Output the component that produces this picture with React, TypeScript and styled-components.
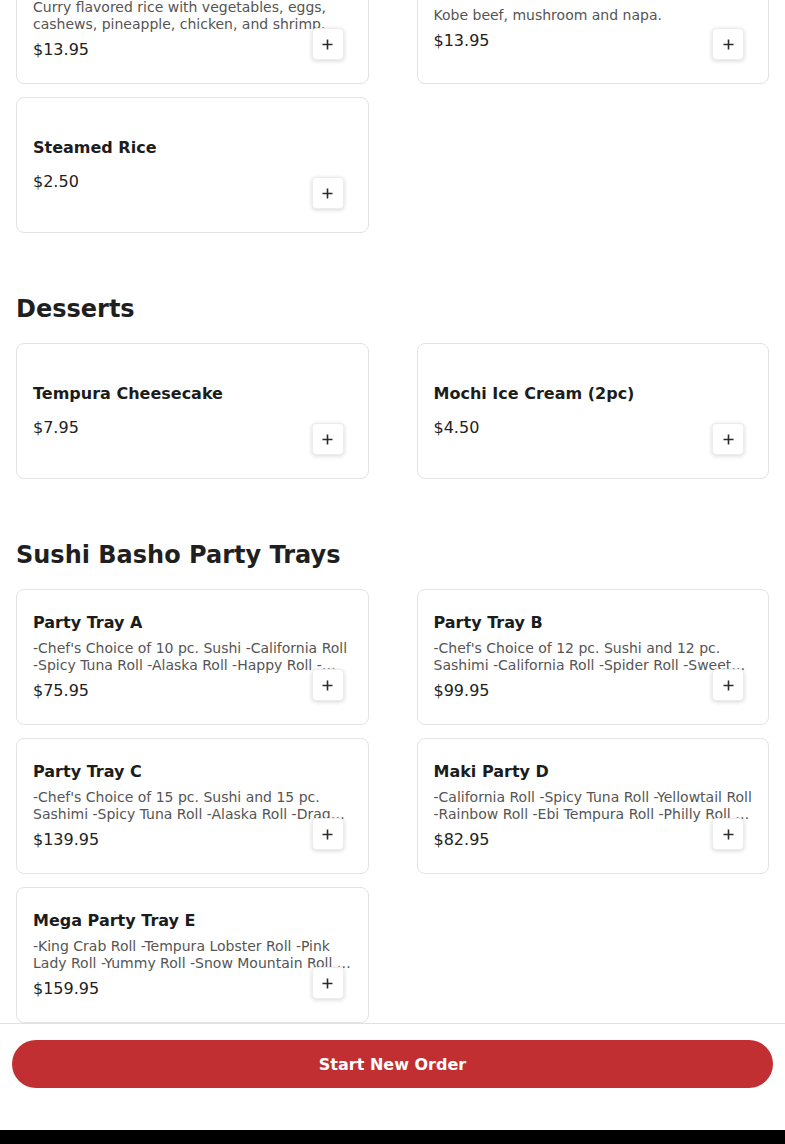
import React from "react";
import styled, { createGlobalStyle } from "styled-components";

interface MenuItem {
  name: string;
  description?: string;
  price: string;
}

interface MenuSection {
  title?: string;
  items: MenuItem[];
}

const sections: MenuSection[] = [
  {
    items: [
      {
        name: "Curry Fried Rice",
        description:
          "Curry flavored rice with vegetables, eggs, cashews, pineapple, chicken, and shrimp.",
        price: "$13.95",
      },
      {
        name: "Beef Sukiyaki",
        description: "Kobe beef, mushroom and napa.",
        price: "$13.95",
      },
      { name: "Steamed Rice", price: "$2.50" },
    ],
  },
  {
    title: "Desserts",
    items: [
      { name: "Tempura Cheesecake", price: "$7.95" },
      { name: "Mochi Ice Cream (2pc)", price: "$4.50" },
    ],
  },
  {
    title: "Sushi Basho Party Trays",
    items: [
      {
        name: "Party Tray A",
        description:
          "-Chef's Choice of 10 pc. Sushi -California Roll -Spicy Tuna Roll -Alaska Roll -Happy Roll -Rainbow Roll",
        price: "$75.95",
      },
      {
        name: "Party Tray B",
        description:
          "-Chef's Choice of 12 pc. Sushi and 12 pc. Sashimi -California Roll -Spider Roll -Sweet Heart Roll -Dragon Roll",
        price: "$99.95",
      },
      {
        name: "Party Tray C",
        description:
          "-Chef's Choice of 15 pc. Sushi and 15 pc. Sashimi -Spicy Tuna Roll -Alaska Roll -Dragon Roll -Rainbow Roll",
        price: "$139.95",
      },
      {
        name: "Maki Party D",
        description:
          "-California Roll -Spicy Tuna Roll -Yellowtail Roll -Rainbow Roll -Ebi Tempura Roll -Philly Roll -Alaska Roll",
        price: "$82.95",
      },
      {
        name: "Mega Party Tray E",
        description:
          "-King Crab Roll -Tempura Lobster Roll -Pink Lady Roll -Yummy Roll -Snow Mountain Roll -Dragon Roll",
        price: "$159.95",
      },
    ],
  },
];

const PlusIcon = () => (
  <svg width="11" height="11" viewBox="0 0 11 11" aria-hidden="true">
    <path d="M5.5 0.5v10M0.5 5.5h10" stroke="#2b2b2b" strokeWidth="1.6" />
  </svg>
);

const App: React.FC = () => {
  return (
    <>
      <GlobalStyle />
      <Page>
        {sections.map((section, sIndex) => (
          <Section key={sIndex} first={sIndex === 0}>
            {section.title && <SectionTitle>{section.title}</SectionTitle>}
            <Grid>
              {section.items.map((item) => (
                <Card key={item.name}>
                  <ItemName>{item.name}</ItemName>
                  {item.description && (
                    <ItemDescription>{item.description}</ItemDescription>
                  )}
                  <ItemPrice hasDescription={!!item.description}>
                    {item.price}
                  </ItemPrice>
                  <AddButton aria-label={`Add ${item.name}`}>
                    <PlusIcon />
                  </AddButton>
                </Card>
              ))}
            </Grid>
          </Section>
        ))}
      </Page>

      <Footer>
        <FooterInner>
          <OrderButton>Start New Order</OrderButton>
        </FooterInner>
        <BottomStrip />
      </Footer>
    </>
  );
};

export default App;

/** Styled Components */
const GlobalStyle = createGlobalStyle`
  * { box-sizing: border-box; }
  html, body {
    margin: 0;
    padding: 0;
    background: #ffffff;
    font-family: "DejaVu Sans", "Noto Sans", sans-serif;
    color: #1f1f1f;
  }
`;

const Page = styled.main`
  padding: 0 16px 160px;
  margin-top: -52px;
`;

const Section = styled.section<{ first: boolean }>`
  margin-top: ${(p) => (p.first ? "0" : "61px")};
`;

const SectionTitle = styled.h2`
  margin: 0 0 19px;
  font-size: 24px;
  line-height: 30px;
  font-weight: 700;
  color: #1f1f1f;
`;

const Grid = styled.div`
  display: grid;
  grid-template-columns: 1fr 1fr;
  column-gap: 48px;
  row-gap: 13px;
`;

const Card = styled.div`
  position: relative;
  height: 136px;
  display: flex;
  flex-direction: column;
  justify-content: center;
  padding: 0 16px 2px;
  background: #ffffff;
  border: 1px solid #e3e3e3;
  border-radius: 8px;
`;

const ItemName = styled.div`
  font-size: 16px;
  line-height: 19px;
  font-weight: 700;
  color: #1c1c1c;
`;

const ItemDescription = styled.div`
  margin-top: 8px;
  font-size: 14px;
  line-height: 17px;
  color: #555555;
  display: -webkit-box;
  -webkit-line-clamp: 2;
  -webkit-box-orient: vertical;
  overflow: hidden;
`;

const ItemPrice = styled.div<{ hasDescription: boolean }>`
  margin-top: ${(p) => (p.hasDescription ? "7px" : "15px")};
  font-size: 16px;
  line-height: 19px;
  color: #222222;
`;

const AddButton = styled.button`
  position: absolute;
  right: 24px;
  bottom: 23px;
  width: 32px;
  height: 32px;
  display: flex;
  align-items: center;
  justify-content: center;
  padding: 0;
  background: #ffffff;
  border: 1px solid #ececec;
  border-radius: 4px;
  box-shadow: 0 1px 4px rgba(0, 0, 0, 0.16);
  cursor: pointer;
`;

const Footer = styled.footer`
  position: fixed;
  left: 0;
  right: 0;
  bottom: 0;
  background: #ffffff;
  border-top: 1px solid #e2e2e2;
`;

const FooterInner = styled.div`
  padding: 16px 12px 42px;
`;

const OrderButton = styled.button`
  display: block;
  width: 100%;
  height: 48px;
  border: none;
  border-radius: 24px;
  background: #c22f32;
  color: #ffffff;
  font-family: "DejaVu Sans", sans-serif;
  font-size: 16px;
  font-weight: 700;
  cursor: pointer;
`;

const BottomStrip = styled.div`
  height: 14px;
  background: #000000;
`;
